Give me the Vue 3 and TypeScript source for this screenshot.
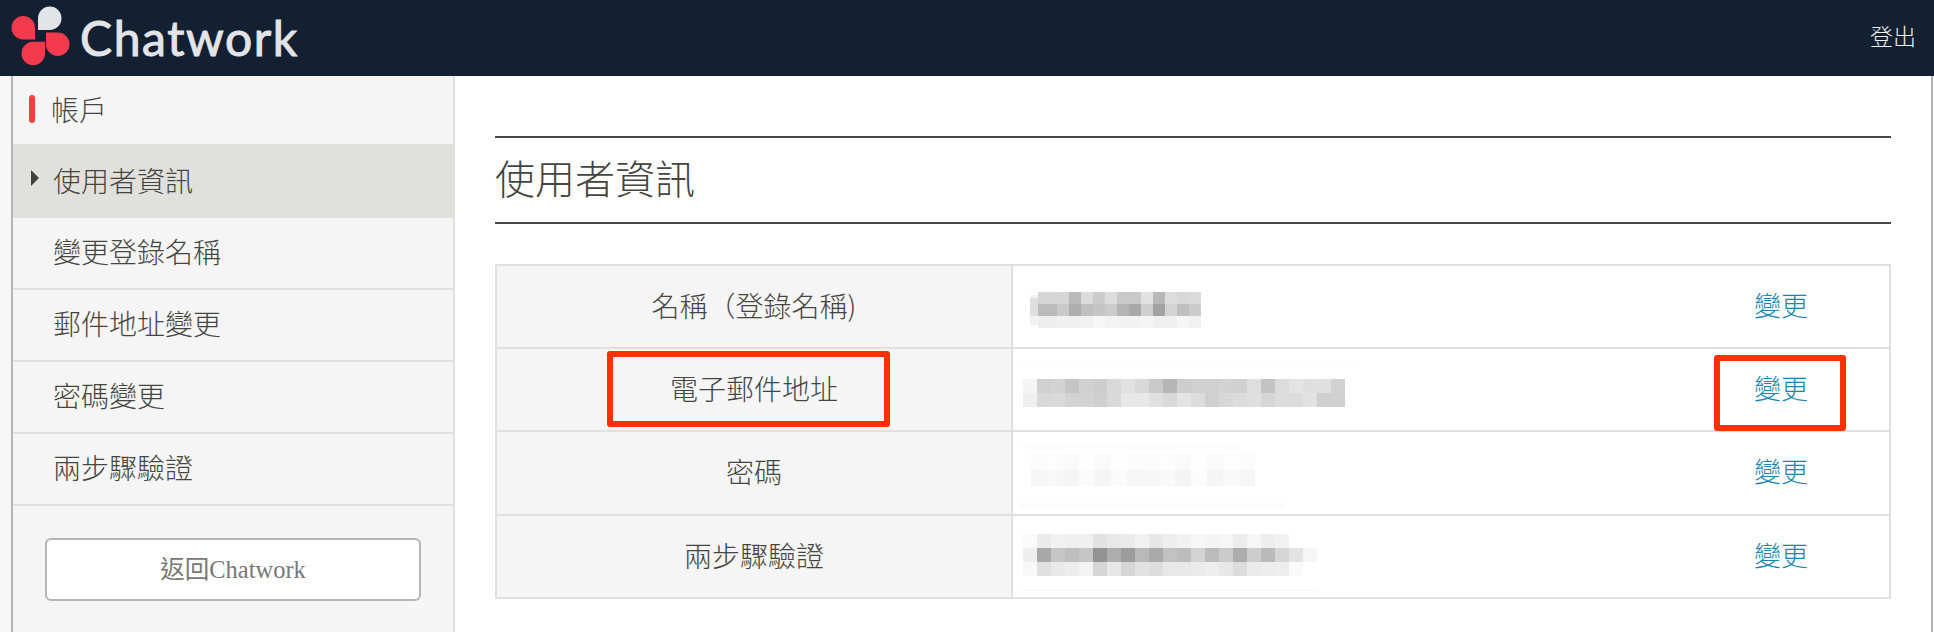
<script setup lang="ts">
interface Mosaic {
  left: number;
  top: number;
  cols: string;
  cellH: number;
  rows: string[][];
}

interface Smudge {
  x: number;
  y: number;
  w: number;
  h: number;
  c: string;
}

interface InfoRow {
  label: string;
  mosaic: Mosaic;
  smudges: Smudge[];
  marked: boolean;
}

const menu = ['變更登錄名稱', '郵件地址變更', '密碼變更', '兩步驟驗證'];

// short hand: each block is one gray byte, a few are slightly warm in the shot but close enough
const toRow = (s: string) => s.split(' ').map((v) => `#${v}${v}${v}`);

const rows: InfoRow[] = [
  {
    label: '名稱（登錄名稱)',
    marked: false,
    mosaic: {
      left: 25,
      top: 7,
      cols: '19px repeat(12, 12px)',
      cellH: 12,
      rows: [
        toRow('d5 d6 b9 dc cc dd c9 c9 e2 b8 dd d8 da'),
        toRow('bb c9 ad c0 c5 cb b4 a9 cf a3 d4 c0 cc'),
        toRow('ee f1 f0 f1 f7 f3 f2 f2 f5 f0 ef f6 f1')
      ]
    },
    smudges: [
      { x: 17, y: 29, w: 23, h: 3, c: '#f3f3f3' },
      { x: 17, y: 32, w: 9, h: 18, c: '#dfdfdf' },
      { x: 17, y: 50, w: 9, h: 9, c: '#f1f1f1' }
    ]
  },
  {
    label: '電子郵件地址',
    marked: true,
    mosaic: {
      left: 10,
      top: 7,
      cols: 'repeat(23, 14px)',
      cellH: 14,
      rows: [
        toRow('f4 d0 d3 c5 d1 cd d9 e2 d9 c9 b6 cd d0 d0 d3 d1 df c3 dc e4 df e0 d2'),
        toRow('ef d8 da d3 d3 cf d9 e8 e8 e0 d9 e4 dc d0 d8 dc df d6 dc dc e2 cf d0')
      ]
    },
    smudges: [{ x: 8, y: 14, w: 340, h: 1, c: '#fbfbfb' }]
  },
  {
    label: '密碼',
    marked: false,
    mosaic: {
      left: 18,
      top: -7,
      cols: 'repeat(14, 16px)',
      cellH: 16,
      rows: [
        toRow('fc fd fa fe fa fe fc fc fd fa fe fa fd fc'),
        toRow('f6 f8 f5 fb f5 fb f6 f7 f9 f4 fc f5 f9 f6')
      ]
    },
    smudges: [
      { x: 7, y: 12, w: 220, h: 5, c: '#fcfcfc' },
      { x: 7, y: 71, w: 265, h: 5, c: '#fbfbfb' }
    ]
  },
  {
    label: '兩步驟驗證',
    marked: false,
    mosaic: {
      left: 10,
      top: -4,
      cols: 'repeat(21, 14px)',
      cellH: 14,
      rows: [
        toRow('fa eb f1 ef f0 e2 e8 eb f2 e7 ee f2 f7 f4 f6 ed f6 ee f2 ff ff'),
        toRow('ee a8 c6 bf c6 93 ad 9c b9 aa c2 bc d4 bc cb ac cd ba d6 e3 f6'),
        toRow('f8 e0 e9 ed f3 d6 e7 d5 e2 dd e8 e8 eb ee e7 dc ea ec ee fa ff')
      ]
    },
    smudges: [{ x: 7, y: 74, w: 298, h: 1, c: '#f8f8f8' }]
  }
];
</script>

<template>
  <div class="page">
    <header class="topbar">
      <div class="brand">
        <svg class="brand-mark" width="76" height="76" viewBox="0 0 76 76">
          <path d="M38 30V18.25A11.75 11.75 0 1 1 49.75 30Z" fill="#e3e4e8" />
          <path d="M35 39.5H23.25A11.75 11.75 0 1 1 35 27.75Z" fill="#f43a4d" />
          <path d="M46 32.5H57.75A11.75 11.75 0 1 1 46 44.25Z" fill="#f43a4d" />
          <path d="M45 41.7V53.45A11.75 11.75 0 1 1 33.25 41.7Z" fill="#f43a4d" />
        </svg>
        <span class="brand-name">Chatwork</span>
      </div>
      <a class="logout">登出</a>
    </header>

    <div class="body">
      <aside class="sidebar">
        <div class="side-title"><i class="side-bar"></i>帳戶</div>
        <div class="side-active"><i class="side-arrow"></i>使用者資訊</div>
        <div v-for="item in menu" :key="item" class="side-item">{{ item }}</div>
        <div class="side-foot">
          <button class="back-btn" type="button">返回Chatwork</button>
        </div>
      </aside>

      <main class="main">
        <h1 class="title">使用者資訊</h1>
        <div class="info-table">
          <div v-for="row in rows" :key="row.label" class="info-row">
            <div class="info-label">
              <span class="label-text">
                {{ row.label }}
                <i v-if="row.marked" class="mark mark-label"></i>
              </span>
            </div>
            <div class="info-value">
              <i
                v-for="(s, k) in row.smudges"
                :key="k"
                class="smudge"
                :style="{ left: s.x + 'px', top: s.y + 'px', width: s.w + 'px', height: s.h + 'px', background: s.c }"
              ></i>
              <div class="mosaic" :style="{ marginLeft: row.mosaic.left + 'px', marginTop: row.mosaic.top + 'px', gridTemplateColumns: row.mosaic.cols }">
                <template v-for="(line, i) in row.mosaic.rows" :key="i">
                  <span v-for="(c, j) in line" :key="j" :style="{ background: c, height: row.mosaic.cellH + 'px' }"></span>
                </template>
              </div>
              <a class="change">
                變更
                <i v-if="row.marked" class="mark mark-link"></i>
              </a>
            </div>
          </div>
        </div>
      </main>
    </div>
  </div>
</template>

<style>
html,
body {
  margin: 0;
  background: #fff;
  overflow: hidden;
}
</style>

<style scoped>
.page {
  width: 1934px;
  height: 632px;
  overflow: hidden;
  font-family: "Liberation Serif", "Noto Sans CJK TC", serif;
  color: #45453f;
}

.topbar {
  height: 76px;
  background: #132032;
  display: flex;
  align-items: center;
  justify-content: space-between;
  padding-right: 18px;
}

.brand {
  display: flex;
  align-items: center;
}

.brand-mark {
  display: block;
}

.brand-name {
  margin-left: 4px;
  font-family: Lato, sans-serif;
  font-weight: 400;
  font-size: 48px;
  letter-spacing: 1.6px;
  line-height: 76px;
  color: #e3e4e8;
  -webkit-text-stroke: 1px #e3e4e8;
}

.logout {
  padding-bottom: 6px;
  font-family: "Noto Sans CJK TC", sans-serif;
  font-weight: 300;
  font-size: 23px;
  color: #f0f0f0;
}

.body {
  display: flex;
  height: 556px;
  padding-left: 11px;
  background: #f7f7f7;
}

.sidebar {
  width: 440px;
  background: #f5f5f5;
  border-left: 2px solid #b5b5b5;
  border-right: 2px solid #e0e0e0;
  font-family: "Noto Sans CJK TC", sans-serif;
  font-weight: 300;
  font-size: 28px;
}

.side-title {
  height: 66px;
  padding-bottom: 2px;
  display: flex;
  align-items: center;
  padding-left: 16px;
  gap: 16px;
  margin-right: -2px;
}

.side-bar {
  width: 6px;
  height: 28px;
  border-radius: 3px;
  background: #f94040;
}

.side-active {
  height: 72px;
  padding-bottom: 2px;
  display: flex;
  align-items: center;
  padding-left: 18px;
  gap: 14px;
  background: #e0e0dd;
  margin-right: -2px;
}

.side-arrow {
  width: 0;
  height: 0;
  border-left: 8px solid #40403c;
  border-top: 8px solid transparent;
  border-bottom: 8px solid transparent;
  margin-top: -4px;
}

.side-item {
  height: 70px;
  line-height: 67px;
  padding-left: 40px;
  border-bottom: 2px solid #e0e0e0;
}

.side-foot {
  padding: 32px 32px 0;
}

.back-btn {
  display: block;
  width: 376px;
  height: 63px;
  background: #fff;
  border: 2px solid #b5b5b5;
  border-radius: 6px;
  font-family: "Liberation Serif", "Noto Sans CJK TC", serif;
  font-size: 24.5px;
  color: #777;
  padding: 0 0 4px;
}

.main {
  flex: 1;
  background: #fff;
  border-right: 2px solid #b5b5b5;
  margin-right: 1px;
  padding: 60px 40px 0;
}

.title {
  margin: 0;
  height: 84px;
  line-height: 78px;
  border-top: 2px solid #4a4a44;
  border-bottom: 2px solid #4a4a44;
  font-family: "Noto Sans CJK TC", sans-serif;
  font-weight: 300;
  font-size: 40px;
  color: #45453f;
}

.info-table {
  margin-top: 40px;
  border: 2px solid #e0e0e0;
  border-bottom: 0;
}

.info-row {
  display: flex;
  height: 81px;
  border-bottom: 2px solid #e0e0e0;
  font-family: "Noto Sans CJK TC", sans-serif;
  font-weight: 300;
  font-size: 28px;
}

.info-row:nth-child(3) {
  height: 82px;
}

.info-label {
  width: 514px;
  background: #f5f5f5;
  border-right: 2px solid #e0e0e0;
  display: flex;
  align-items: center;
  justify-content: center;
}

.label-text,
.change {
  position: relative;
  line-height: 42px;
  margin-bottom: 4px;
}

.info-value {
  position: relative;
  flex: 1;
  display: flex;
  align-items: center;
  justify-content: space-between;
  padding-right: 81px;
}

.smudge {
  position: absolute;
}

.mosaic {
  position: relative;
  display: grid;
}

.mosaic span {
  display: block;
}

.change {
  font-size: 27px;
  color: #1585b5;
}

.mark {
  position: absolute;
  border: 6px solid #ff3000;
  border-radius: 3px;
}

.mark-label {
  left: -63px;
  right: -52px;
  top: -16px;
  bottom: -18px;
}

.mark-link {
  left: -40px;
  right: -38px;
  top: -12px;
  bottom: -22px;
}
</style>
